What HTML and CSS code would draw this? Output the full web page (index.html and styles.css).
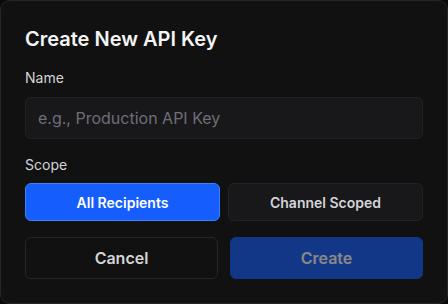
FILE: index.html
```html
<!DOCTYPE html>
<html lang="en">
  <head>
    <meta charset="UTF-8" />
    <meta name="viewport" content="width=device-width, initial-scale=1.0" />
    <title>Create New API Key</title>
    <link rel="stylesheet" href="styles.css">
  </head>
  <body>
    <div class="dialog">
      <h2>Create New API Key</h2>
      <form id="key-form">
        <div class="form-group">
          <label for="key-name">Name</label>
          <input type="text" id="key-name" placeholder="e.g., Production API Key" />
        </div>
        <div class="form-group">
          <label>Scope</label>
          <div class="scope-options">
            <button type="button" class="scope-btn active">All Recipients</button>
            <button type="button" class="scope-btn">Channel Scoped</button>
          </div>
        </div>
        <div class="actions">
          <button type="button" class="btn-cancel">Cancel</button>
          <button type="submit" class="btn-create" disabled>Create</button>
        </div>
      </form>
    </div>
  </body>
</html>
```

FILE: styles.css
```css
body {
  font-family: Inter, "Noto Sans", sans-serif;
  background-color: #0a0a0a;
  margin: 0;
}

.dialog {
  width: 448px;
  box-sizing: border-box;
  background-color: #111111;
  border: 1px solid #262626;
  border-radius: 10px;
  padding: 24px;
}

.dialog h2 {
  font-size: 20px;
  line-height: 28px;
  font-weight: 600;
  color: #f4f4f5;
  margin: 0 0 15px;
}

.form-group {
  margin-bottom: 16px;
}

.form-group label {
  display: block;
  font-size: 14px;
  line-height: 20px;
  color: #d4d4d8;
  margin-bottom: 9px;
}

.form-group:nth-child(2) label {
  margin-bottom: 8px;
}

.form-group input {
  width: 100%;
  box-sizing: border-box;
  height: 42px;
  padding: 0 12px;
  background-color: #18181b;
  border: 1px solid #222225;
  border-radius: 6px;
  font-family: inherit;
  font-size: 16px;
  color: #f4f4f5;
}

.form-group input::placeholder {
  color: #6e6e78;
}

.scope-options {
  display: grid;
  grid-template-columns: 1fr 1fr;
  gap: 8px;
}

.scope-btn {
  height: 38px;
  border-radius: 6px;
  border: 1px solid #222225;
  background-color: #18181b;
  color: #d4d4d8;
  font-family: inherit;
  font-size: 14px;
  font-weight: 600;
}

.scope-btn.active {
  background-color: #155dfc;
  border-color: #3b82f6;
  color: #ffffff;
}

.actions {
  display: grid;
  grid-template-columns: 1fr 1fr;
  gap: 12px;
}

.actions button {
  height: 42px;
  border-radius: 6px;
  font-family: inherit;
  font-size: 16px;
  font-weight: 600;
}

.btn-cancel {
  background-color: transparent;
  border: 1px solid #262628;
  color: #d4d4d8;
}

.btn-create {
  background-color: #155dfc;
  border: 1px solid #155dfc;
  color: #ffffff;
  opacity: 0.5;
}
```
